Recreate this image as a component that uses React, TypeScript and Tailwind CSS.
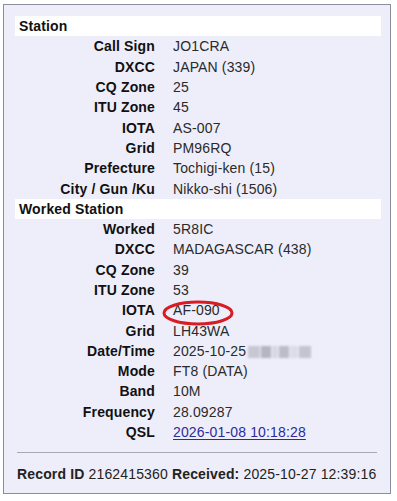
import React from 'react';

type Row = { label: string; value: React.ReactNode };

const Blurred = () => (
  <span className="ml-[2px] inline-flex h-[13px] items-center gap-[1px] align-middle blur-[1px]">
    <span className="h-[12px] w-[12px] bg-[#c8c8d4]" />
    <span className="h-[12px] w-[10px] bg-[#b4b4c2]" />
    <span className="h-[12px] w-[6px] bg-[#d8d8e2]" />
    <span className="h-[12px] w-[10px] bg-[#bcbcc8]" />
    <span className="h-[12px] w-[8px] bg-[#dcdce6]" />
    <span className="h-[12px] w-[12px] bg-[#c4c4d0]" />
  </span>
);

// hand-drawn red ring around the IOTA value
const Circled = ({ children }: { children: React.ReactNode }) => (
  <span className="relative inline-block">
    {children}
    <svg
      className="absolute left-[-11px] top-1/2 mt-[-10px]"
      width="72"
      height="26"
      viewBox="0 0 72 26"
      fill="none"
    >
      <ellipse cx="36" cy="13" rx="34" ry="11" stroke="#d81c22" strokeWidth="3" />
    </svg>
  </span>
);

const station: Row[] = [
  { label: 'Call Sign', value: 'JO1CRA' },
  { label: 'DXCC', value: 'JAPAN (339)' },
  { label: 'CQ Zone', value: '25' },
  { label: 'ITU Zone', value: '45' },
  { label: 'IOTA', value: 'AS-007' },
  { label: 'Grid', value: 'PM96RQ' },
  { label: 'Prefecture', value: 'Tochigi-ken (15)' },
  { label: 'City / Gun /Ku', value: 'Nikko-shi (1506)' },
];

const worked: Row[] = [
  { label: 'Worked', value: '5R8IC' },
  { label: 'DXCC', value: 'MADAGASCAR (438)' },
  { label: 'CQ Zone', value: '39' },
  { label: 'ITU Zone', value: '53' },
  { label: 'IOTA', value: <Circled>AF-090</Circled> },
  { label: 'Grid', value: 'LH43WA' },
  {
    label: 'Date/Time',
    value: (
      <>
        2025-10-25
        <Blurred />
      </>
    ),
  },
  { label: 'Mode', value: 'FT8 (DATA)' },
  { label: 'Band', value: '10M' },
  { label: 'Frequency', value: '28.09287' },
  {
    label: 'QSL',
    value: <a className="text-[#2b2b9c] underline underline-offset-2">2026-01-08 10:18:28</a>,
  },
];

const Header = ({ title }: { title: string }) => (
  <div className="flex h-[20.3px] items-center bg-white pl-[4px] font-bold text-[#111]">{title}</div>
);

const Rows = ({ rows }: { rows: Row[] }) => (
  <>
    {rows.map((row, i) => (
      <div key={i} className="flex h-[20.3px] items-center">
        <div className="w-[140px] text-right font-bold text-[#111]">{row.label}</div>
        <div className="pl-[18px] text-[#2a2a2a]">{row.value}</div>
      </div>
    ))}
  </>
);

const App = () => {
  return (
    <div className="h-[501px] w-[397px] bg-white pl-[3px] pt-[4px] font-['Liberation_Sans',Arial,sans-serif] text-[14px] leading-[20px] tracking-[0.15px]">
      <div className="h-[490px] w-[388px] border border-[#8c8c9c] bg-[#eeeefa] pl-[11px] pr-[9px] pt-[11px]">
        <Header title="Station" />
        <Rows rows={station} />
        <Header title="Worked Station" />
        <Rows rows={worked} />
        <div className="ml-[2px] mr-[4px] mt-[10px] border-t border-[#a8a8b4]" />
        <div className="ml-[2px] mt-[11px] text-[#222]">
          <span className="font-bold">Record ID</span> 2162415360 <span className="font-bold">Received:</span>{' '}
          2025-10-27 12:39:16
        </div>
      </div>
    </div>
  );
};

export default App;
